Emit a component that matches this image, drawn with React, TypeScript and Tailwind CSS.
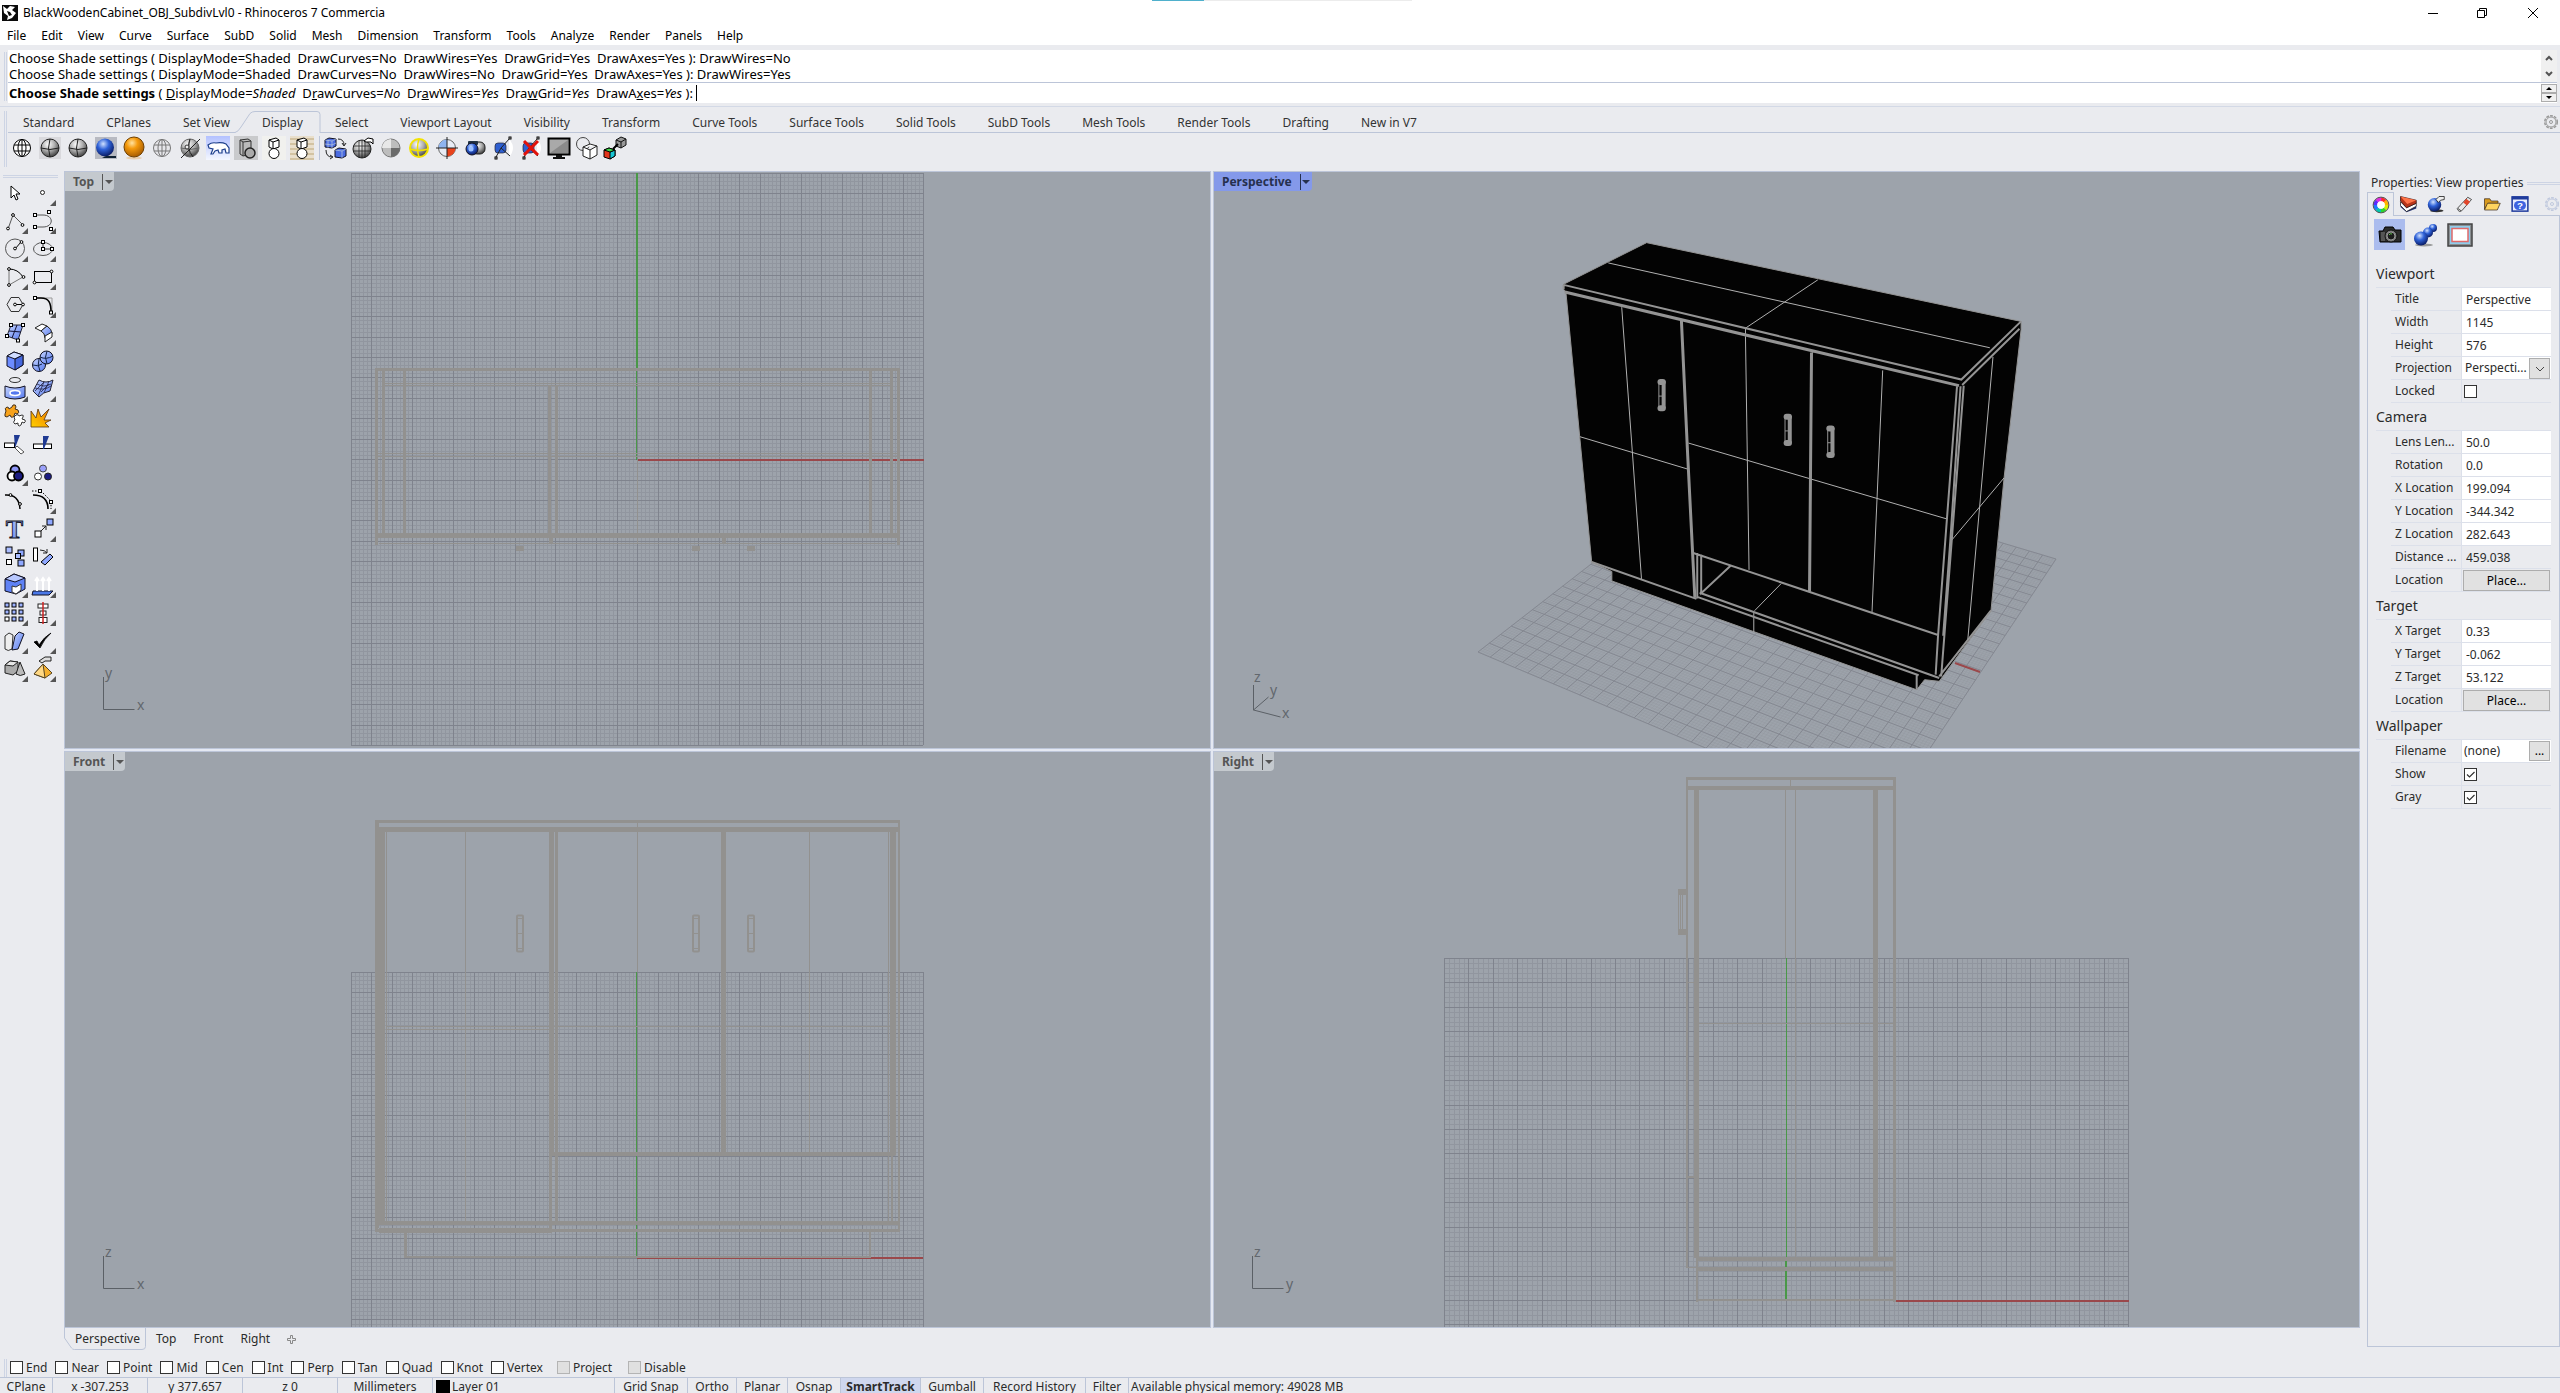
import React from "react";

const MENUS = ["File", "Edit", "View", "Curve", "Surface", "SubD", "Solid", "Mesh", "Dimension", "Transform", "Tools", "Analyze", "Render", "Panels", "Help"];

const TABS = [
  "Standard", "CPlanes", "Set View", "Display", "Select", "Viewport Layout", "Visibility", "Transform",
  "Curve Tools", "Surface Tools", "Solid Tools", "SubD Tools", "Mesh Tools", "Render Tools", "Drafting", "New in V7",
];

const SNAPS = ["End", "Near", "Point", "Mid", "Cen", "Int", "Perp", "Tan", "Quad", "Knot", "Vertex"];

const TOGGLES = [
  { name: "Grid Snap", width: "w-[73px]" },
  { name: "Ortho", width: "w-[49px]" },
  { name: "Planar", width: "w-[51px]" },
  { name: "Osnap", width: "w-[53px]" },
  { name: "SmartTrack", width: "w-[80px]", on: true },
  { name: "Gumball", width: "w-[63px]" },
  { name: "Record History", width: "w-[102px]" },
  { name: "Filter", width: "w-[43px]" },
];

const WIRE = "#92918f";
const GREEN = "#4a9848";
const RED = "#9a484b";

/* ---------- shared paint ---------- */

const Paints = () => (
  <svg className="absolute size-0" aria-hidden>
    <defs>
      <radialGradient id="gray" cx="0.4" cy="0.3" r="0.7">
        <stop offset="0" stopColor="#fff" />
        <stop offset="0.5" stopColor="#b0b0b0" />
        <stop offset="1" stopColor="#444" />
      </radialGradient>
      <radialGradient id="blue" cx="0.4" cy="0.3" r="0.7">
        <stop offset="0" stopColor="#cfe0ff" />
        <stop offset="0.45" stopColor="#2f62d8" />
        <stop offset="1" stopColor="#0a1c66" />
      </radialGradient>
      <radialGradient id="orange" cx="0.4" cy="0.3" r="0.7">
        <stop offset="0" stopColor="#ffe2a0" />
        <stop offset="0.4" stopColor="#f59a0c" />
        <stop offset="1" stopColor="#a85c00" />
      </radialGradient>
      <linearGradient id="sky" x1="0" y1="0" x2="1" y2="1">
        <stop offset="0" stopColor="#c5d4ff" />
        <stop offset="1" stopColor="#5478ee" />
      </linearGradient>
      <linearGradient id="fire" x1="0" y1="1" x2="1" y2="0">
        <stop offset="0" stopColor="#ffd000" />
        <stop offset="1" stopColor="#f07800" />
      </linearGradient>
      <linearGradient id="ice" x1="0" y1="0" x2="0" y2="1">
        <stop offset="0" stopColor="#b3c1ff" />
        <stop offset="1" stopColor="#f4f7ff" />
      </linearGradient>
    </defs>
  </svg>
);

/* ---------- left tool palette, 28px cells ---------- */

const Sq = ({ x, y, s = 3, fill = "#fff" }: { x: number; y: number; s?: number; fill?: string }) => (
  <rect x={x - s / 2} y={y - s / 2} width={s} height={s} fill={fill} stroke="#000" />
);

const Dot = ({ x, y }: { x: number; y: number }) => <circle cx={x} cy={y} r="1.4" fill="#fff" stroke="#000" />;

type Tool = { name: string; more?: boolean; art: React.ReactNode };

const TOOLS: Tool[] = [
  { name: "Select", art: <path d="M10 7v12l3-3 2 5 2-1-2-5h4z" fill="#fff" stroke="#000" /> },
  { name: "Point", more: true, art: <circle cx="13.5" cy="13.5" r="2" fill="#fff" stroke="#222" /> },
  { name: "Polyline", more: true, art: <><path d="M7 22L12 8l10 10" fill="none" stroke="#555" /><Dot x={7} y={21.5} /><Dot x={12} y={8} /><Dot x={21.5} y={18} /></> },
  { name: "Control point curve", more: true, art: <><path d="M6 8h8c11 0 11 12 0 12H6" fill="none" stroke="#555" /><Sq x={6} y={8} /><Sq x={20} y={5} /><Sq x={6} y={20} /><Sq x={22} y={22} /></> },
  { name: "Circle", more: true, art: <><circle cx="14" cy="13.5" r="9.5" fill="none" stroke="#555" /><path d="M14 14l6-7" stroke="#000" /><Dot x={14} y={13.5} /><Dot x={20.5} y={7} /></> },
  { name: "Ellipse", more: true, art: <><ellipse cx="14" cy="14" rx="9.5" ry="6.5" fill="none" stroke="#555" /><path d="M14 7v7h9" fill="none" stroke="#333" /><Sq x={14} y={7} /><Sq x={14} y={14} /><Sq x={23} y={14} /></> },
  { name: "Arc", more: true, art: <><path d="M8 6v16l14-8" fill="none" stroke="#777" /><path d="M8 6q9 0 14 8" fill="none" stroke="#000" /><Dot x={8} y={6} /><Dot x={22.5} y={14} /><Dot x={8} y={22} /></> },
  { name: "Rectangle", more: true, art: <><rect x="5.5" y="8.5" width="17" height="11" fill="none" stroke="#000" /><Dot x={5.5} y={19.5} /><Dot x={22.5} y={8.5} /></> },
  { name: "Polygon", more: true, art: <><path d="M6 13.5l4-7h8l4 7-4 7h-8z" fill="none" stroke="#333" /><path d="M14 13.5h8" stroke="#000" /><Dot x={14} y={13.5} /><Dot x={22} y={13.5} /></> },
  { name: "Fillet", more: true, art: <><path d="M7 7h16v14" fill="none" stroke="#999" /><path d="M7 7h5c8 0 10 5 10 14" fill="none" stroke="#000" strokeWidth="1.6" /><Sq x={6} y={7} /><Sq x={22} y={21.5} /></> },
  { name: "Surface from points", more: true, art: <><path d="M10 6h12l-5 15-11-4z" fill="url(#sky)" stroke="#223" /><path d="M16 6l-5 13M8 12l12 1" stroke="#113" fill="none" /><Sq x={10} y={6} /><Sq x={22} y={6} /><Sq x={17} y={21.5} /><Sq x={6} y={17} /></> },
  { name: "Surface blend", more: true, art: <><path d="M6 9l7-4 5 2-6 5z" fill="#fff" stroke="#222" /><path d="M12 12l6-5q5 3 5 8l-7 4q0-5-4-7z" fill="url(#sky)" stroke="#222" /><path d="M16 17l7-4v5l-7 5z" fill="#fff" stroke="#222" /></> },
  { name: "Box", more: true, art: <><path d="M6 9l7-4 9 3v10l-8 5-8-4z" fill="#6c8cff" stroke="#112" /><path d="M6 9l7-4 9 3-8 4z" fill="#d0dcff" stroke="#112" /><path d="M14 12l8-4v10l-8 5z" fill="#4668dd" stroke="#112" /></> },
  { name: "Boolean union", more: true, art: <><circle cx="10" cy="18" r="6.5" fill="url(#sky)" stroke="#112" /><circle cx="17.5" cy="10.5" r="6.5" fill="url(#sky)" stroke="#112" /><path d="M11 10q6 3 13-1M18 4q-3 6 0 13M4 18q5 2 9-1M10 12q-2 6 1 12" stroke="#124" fill="none" /></> },
  { name: "Project curve", more: true, art: <><ellipse cx="14" cy="5" rx="5.5" ry="2.5" fill="none" stroke="#333" /><path d="M4 11q10 4 20 0v11q-10 4-20 0z" fill="url(#sky)" stroke="#112" /><ellipse cx="14" cy="18" rx="5" ry="2.5" fill="#5478ee" stroke="#fff" strokeWidth="1.6" /></> },
  { name: "Mesh", more: true, art: <><path d="M4 16l6-11q7 4 14 0l-3 11q-7 1-11 6z" fill="url(#sky)" stroke="#223" /><path d="M8 9q7 4 14 0M6 13q9 3 16-2M9 21l6-14M15 18l5-12M6 16l9-9M12 17l8-8" stroke="#224" fill="none" strokeWidth="0.8" /></> },
  {
    name: "Explode",
    art: (
      <>
        <path d="M5 8q-2-3 1-4 2 0 2 2l3-2 1-2q3-1 3 2l-1 2 3 1q2 3-1 4l-2-1-1 3q-2 2-3 1l-1-2-3 2q-3 0-2-3z" fill="#f7a21b" stroke="#432" />
        <path d="M13 14l2-2q3-1 3 1l3-1q2 0 1 2l-1 2 3 1q1 2-1 3l-2-1-1 3q-2 2-3 0v-2l-3 1q-2-1-1-3l1-1z" fill="#fff" stroke="#333" />
      </>
    ),
  },
  { name: "Burst", art: <path d="M2 24V8l5 7 2-9 3 8 8-8-5 11h7l-6 3 4 4z" fill="url(#fire)" stroke="#531" strokeWidth="0.8" /> },
  { name: "Trim", art: <><rect x="3.5" y="12" width="10" height="4.5" fill="#fff" stroke="#000" /><path d="M13 4h6l-5 13z" fill="#1f3a93" /><path d="M16 15l7 6-3 2-6-6z" fill="#fff" stroke="#555" /></> },
  { name: "Split", art: <><rect x="4.5" y="13" width="18" height="4.5" fill="#fff" stroke="#000" /><path d="M14 5h6l-5 13h-1z" fill="#1f3a93" /></> },
  { name: "Join", more: true, art: <><circle cx="14" cy="11" r="4.5" fill="#8d95f5" stroke="#000" strokeWidth="1.8" /><circle cx="11" cy="17" r="4.5" fill="#fff" stroke="#000" strokeWidth="1.8" /><circle cx="17.5" cy="17" r="4.5" fill="#1b1b80" stroke="#000" strokeWidth="1.8" /></> },
  { name: "Group", art: <><circle cx="14" cy="9.5" r="3.5" fill="#9aa0fa" stroke="#444" /><circle cx="9" cy="17.5" r="3.5" fill="#fff" stroke="#333" /><circle cx="19" cy="17.5" r="3.5" fill="#1b1b80" stroke="#222" /></> },
  { name: "Edit points", art: <><path d="M4 8q14-1 15 14" fill="none" stroke="#000" strokeWidth="1.5" /><Dot x={9.5} y={8} /><Dot x={19} y={17} /></> },
  { name: "Control points", more: true, art: <><path d="M4 8q15 0 15 14" fill="none" stroke="#000" strokeWidth="1.6" /><path d="M3 4h9l10 10v8" fill="none" stroke="#000" strokeDasharray="1.5 1.5" /><Sq x={11} y={4} /><Sq x={22} y={15} /></> },
  { name: "Text", art: <text x="13.5" y="23" textAnchor="middle" fontFamily="Liberation Serif, serif" fontWeight="700" fontSize="26" fill="url(#sky)" stroke="#112" strokeWidth="0.9">T</text> },
  { name: "Move", more: true, art: <><Sq x={9} y={19} s={6} /><path d="M12 16l5-5m-4 0h4v4" fill="none" stroke="#222" /><Sq x={21} y={7} s={6} fill="#8fa8ff" /></> },
  { name: "Copy", art: <><Sq x={8} y={7} s={6} fill="#a9bcff" /><Sq x={8} y={19} s={5} /><Sq x={20} y={10} s={6} fill="#8fa8ff" /><Sq x={17} y={13} s={5} fill="#a9bcff" /><Sq x={20} y={20} s={6} fill="#8fa8ff" /></> },
  { name: "Rotate", art: <><rect x="4.5" y="5" width="4" height="13" fill="#fff" stroke="#000" /><path d="M11 7q5 0 7 3m0-4v4h-4" fill="none" stroke="#222" /><path d="M12 19l9-8 3 3-8 8z" fill="#8fa8ff" stroke="#000" /></> },
  { name: "Cage edit", more: true, art: <><path d="M4 8l9-5 11 4v11l-9 5-11-3z" fill="#5f82f5" stroke="#112" /><path d="M4 8l9-5 11 4-10 4z" fill="#b8c8ff" stroke="#112" /><path d="M11 15l4 1 5-3v6l-5 4-4-2z" fill="#fff" stroke="#333" /></> },
  { name: "Analyze direction", more: true, art: <><path d="M4 20h20l-4 4H3z" fill="#4a78e8" stroke="#112" /><path d="M8 20V8M14 20V8M20 20V8M6 10l2-3 2 3M12 10l2-3 2 3M18 10l2-3 2 3" stroke="#fff" strokeWidth="2" fill="none" /></> },
  { name: "Array", more: true, art: <>{[6, 13, 20].map((y) => [6, 13, 20].map((x) => <Sq key={`${x}-${y}`} x={x} y={y} s={4} fill={x < 10 && y > 15 ? "#fff" : "#9db2ff"} />))}</> },
  { name: "Align", more: true, art: <><rect x="9" y="5" width="10" height="4" fill="#fff" stroke="#222" /><rect x="11" y="12" width="6" height="4" fill="#fff" stroke="#222" /><rect x="10" y="18.5" width="8" height="5" fill="#fff" stroke="#222" /><path d="M14 3v22" stroke="#c22" strokeWidth="1.5" /></> },
  { name: "Bend", more: true, art: <><path d="M4 9l4-3 4 2-1 14q-4 3-7 0z" fill="#eee" stroke="#333" /><path d="M14 9l4-4 5 2-6 15-6 1z" fill="url(#sky)" stroke="#112" /></> },
  { name: "Check", more: true, art: <path d="M5 15l3-1 2 4q5-8 12-12-7 6-11 15z" fill="#000" stroke="#000" strokeWidth="0.8" /> },
  { name: "Solid primitives", more: true, art: <><path d="M4 10l5-4 8 1v9l-5 4-8-2z" fill="#aaa" stroke="#222" /><path d="M4 10l8 1 5-4-8-1z" fill="#e6e6e6" stroke="#222" /><path d="M19 7l5 12q-5 3-9 0z" fill="#bbb" stroke="#222" /></> },
  { name: "Render", more: true, art: <><path d="M14 9l9 9-7 5-11-4z" fill="#f5b02e" stroke="#542" /><path d="M14 9l2 14-11-4z" fill="#ffd884" stroke="#542" /><path d="M10 6l6-4h6v4h-6l-3 2z" fill="#ddd" stroke="#222" /></> },
];

/* ---------- display toolbar, 24px art ---------- */

const Mesh = ({ fill, stroke = "#222" }: { fill: string; stroke?: string }) => (
  <>
    <circle cx="12" cy="12" r="9" fill={fill} stroke={stroke} />
    <path d="M3 12q9 3 18 0M12 3q-3 9 0 18" fill="none" stroke={stroke} />
  </>
);

const Globe = ({ stroke, fill = "none" }: { stroke: string; fill?: string }) => (
  <>
    <circle cx="12" cy="12" r="8.5" fill={fill} stroke={stroke} />
    <ellipse cx="12" cy="12" rx="4" ry="8.5" fill="none" stroke={stroke} />
    <path d="M4 9h16M4 15h16M12 3.5v17" fill="none" stroke={stroke} />
  </>
);

const Cubes = ({ stroke = "#000" }: { stroke?: string }) => (
  <>
    <path d="M7 4l7-2 3 2v7l-6 2-4-2zM7 4l4 2v7M11 6l6-2" fill="#fff" stroke={stroke} />
    <circle cx="12" cy="17.5" r="5" fill="#fff" stroke={stroke} />
  </>
);

const Lens = () => (
  <>
    <path d="M18 3q8 9 0 18z" fill="#fff" />
    <path d="M7 5q-6 7 0 14l10-14" fill="#dfe3ee" />
    <rect x="4" y="7" width="11" height="10" rx="3" fill="#2e5fd0" stroke="#223" strokeWidth="0.7" />
    <path d="M10 12L19 2M10 12l9 8M10 12L5 21" stroke="#222" fill="none" />
    <Sq x={19} y={2} s={2} />
    <Sq x={5} y={22} s={2} />
  </>
);

const DISPLAY_MODES: Tool[] = [
  { name: "Wireframe", art: <Globe stroke="#000" fill="#fff" /> },
  { name: "Shaded", art: <><path d="M1 1h22v22H1z" fill="#c8c8cc" opacity="0.5" /><Mesh fill="url(#gray)" /></> },
  { name: "Shade", art: <Mesh fill="url(#gray)" /> },
  { name: "Rendered", art: <><path d="M1 1h22v22H1z" fill="#b8bac2" /><circle cx="11" cy="11.5" r="9" fill="url(#blue)" /><path d="M12 20h10v2H8z" fill="#123" /></> },
  { name: "Render preview", art: <><ellipse cx="12" cy="22" rx="8" ry="1.5" fill="#e9cfb0" /><circle cx="12" cy="11" r="10" fill="url(#orange)" stroke="#704000" /></> },
  { name: "Ghosted", art: <Globe stroke="#777" fill="#e6e6ea" /> },
  { name: "X-ray", art: <><Mesh fill="url(#gray)" stroke="#666" /><path d="M3 22L22 3M12 3q-4 9 3 18" stroke="#222" fill="none" /><circle cx="9" cy="11" r="2" fill="#eee" stroke="#333" /></> },
  { name: "Arctic", art: <><rect width="24" height="24" fill="url(#ice)" /><path d="M2 9q4-3 8-2 6-1 10 1l3 4v5h-3l-1-4-3 1v3h-3l-1-3-3 1-2 3H5l2-5-4-1z" fill="#fff" stroke="#1d3f8c" strokeWidth="1.2" /></> },
  { name: "Technical", art: <><rect width="24" height="24" fill="#c9cacc" /><path d="M6 4l8-1 3 2v13l-8 2-3-2zM6 4l3 2v14M9 6l8-1" fill="#bbb" stroke="#333" /><circle cx="16" cy="17" r="5" fill="#aaa" stroke="#222" strokeWidth="1.5" /></> },
  { name: "Artistic", art: <><rect width="24" height="24" fill="#f1f1ee" /><Cubes /></> },
  { name: "Pen", art: <><path d="M0 0h24v24H0z" fill="#e9dfcc" /><path d="M0 3h24M0 8h24M0 13h24M0 18h24M0 23h24" stroke="#d3c3a2" strokeWidth="2" /><Cubes /></> },
];

const DISPLAY_TOOLS: Tool[] = [
  { name: "Swap display", art: <><path d="M2 4l4-2 7 1v7l-4 2-7-1zM12 14l4-2 7 1v7l-4 2-7-1z" fill="#4a6be0" stroke="#112" /><path d="M2 4l7 1 4-2M9 5v7M5 4v8M2 8l7 1 4-2M12 14l7 1 4-2M19 15v7" stroke="#bcd" strokeWidth="0.7" fill="none" /><path d="M15 3q6 0 6 6m-2-2l2 3 2-3M3 14q0 7 6 7m-2-2l3 2-3 2" stroke="#222" fill="none" /></> },
  { name: "Flat shade", art: <><circle cx="11" cy="13" r="9" fill="url(#gray)" stroke="#222" /><path d="M2.5 10h17M2.5 15h17M8 4.5v17M14 4.5v17M11 4v18" stroke="#222" fill="none" strokeWidth="0.8" /><path d="M13 5l4-3 5 1v5l-2-2h-5z" fill="#fff" stroke="#000" /></> },
  { name: "Shade selected", art: <><circle cx="12" cy="12" r="9" fill="#bdbdbd" stroke="#777" /><path d="M12 3a9 9 0 0 0-9 9h9z" fill="#e8e8e8" /><path d="M12 12v9a9 9 0 0 0 9-9z" fill="#6b6b6b" /></> },
  { name: "Highlight", art: <><circle cx="12" cy="12" r="9" fill="url(#gray)" stroke="#f2e200" strokeWidth="2" /><path d="M3 13q9 3 18 0M12 3q-3 9 0 18" fill="none" stroke="#f2e200" strokeWidth="1.5" /></> },
  { name: "Color wheel", art: <><circle cx="12" cy="12" r="8.5" fill="#e8ecf5" stroke="#666" /><path d="M12 3.5A8.5 8.5 0 0 0 3.5 12H12z" fill="#8fb4f0" /><path d="M12 12v8.500a8.500 8.500 0 0 0 8.500-8.500z" fill="#e8431c" /><path d="M1 12h22M12 1v22" stroke="#222" /></> },
  { name: "Camera sphere", art: <><rect x="9" y="6" width="13" height="12" rx="5" fill="url(#gray)" stroke="#222" /><rect x="5" y="5" width="10" height="4" rx="1" fill="#234" /><circle cx="9" cy="13" r="6" fill="url(#blue)" stroke="#112" /><circle cx="8" cy="13" r="2.5" fill="#9cc0ff" /></> },
  { name: "Clipping plane", art: <Lens /> },
  { name: "Disable clipping plane", art: <><Lens /><path d="M5 5l14 14M19 5L5 19" stroke="#e3120b" strokeWidth="3" /></> },
  { name: "Full screen", art: <><rect x="1.5" y="2.5" width="21" height="16" fill="#a9a9a9" stroke="#000" strokeWidth="2" /><path d="M3 17L21 4v13z" fill="#8a8a8a" /><path d="M9 19h6v2h3v2H6v-2h3z" fill="#111" /></> },
  { name: "Object display", art: <><circle cx="8" cy="8" r="6.5" fill="none" stroke="#444" /><path d="M8 11l7-3 7 2v9l-7 4-7-3zM8 11l7 3 7-4M15 14v9" fill="#fff" stroke="#222" /></> },
  { name: "Match display", art: <><path d="M13 4l5-3 5 2v6l-5 3-5-2z" fill="#999" stroke="#111" /><path d="M13 4l5 2 5-3M18 6v6" stroke="#111" fill="none" /><path d="M10 13l5-5" stroke="#000" strokeWidth="2" /><path d="M1 14l5-2 6 2v6l-5 3-6-2z" fill="#e2361b" stroke="#000" /><path d="M7 16l5-2v6l-5 3z" fill="#19c7d6" stroke="#000" /><path d="M1 14l5-2 6 2-5 2z" fill="#3ed84a" stroke="#000" /></> },
];

const IconButton = ({ tool }: { tool: Tool }) => (
  <button type="button" aria-label={tool.name} className="flex h-7 w-7 items-center justify-center">
    <svg viewBox="0 0 24 24" className="size-6">{tool.art}</svg>
  </button>
);

const Gear = ({ className }: { className: string }) => (
  <svg viewBox="0 0 16 16" className={className} fill="none" stroke="currentColor">
    <circle cx="8" cy="8" r="6.3" strokeWidth="1.5" strokeDasharray="2.8 1.2" />
    <circle cx="8" cy="8" r="5" />
    <circle cx="8" cy="8" r="1.5" />
  </svg>
);

/* ---------- viewport drawings ---------- */

const gridPath = (x: number, y: number, step: number, count: number) => {
  const size = step * count;
  let d = "";
  for (let i = 0; i <= count; i++) {
    const gx = Math.round(x + i * step) + 0.5;
    const gy = Math.round(y + i * step) + 0.5;
    d += `M${gx} ${y}v${size}M${x} ${gy}h${size}`;
  }
  return d;
};

const FlatGrid = ({ x, y, cell }: { x: number; y: number; cell: number }) => (
  <g fill="none" shapeRendering="crispEdges">
    <path d={gridPath(x, y, cell / 5, 140)} stroke="#91969f" />
    <path d={gridPath(x, y, cell, 28)} stroke="#7f838d" />
  </g>
);

/** filled bars, each [left, top, right, bottom] */
const Bars = ({ list, fill = WIRE }: { list: number[][]; fill?: string }) => (
  <g fill={fill} shapeRendering="crispEdges">
    {list.map(([l, t, r, b]) => <rect key={`${l}-${t}-${r}-${b}`} x={l} y={t} width={r - l} height={b - t} />)}
  </g>
);

const AxisIcon = ({ x, y, h, v }: { x: number; y: number; h: string; v: string }) => (
  <>
    <path d={`M${x + 0.5} ${y - 32}v32.5h31`} fill="none" stroke="#5b6066" />
    <g fill="#62676d" fontSize="14" fontFamily="Noto Sans, sans-serif">
      <text x={x + 2} y={y - 31}>{v}</text>
      <text x={x + 34} y={y + 1}>{h}</text>
    </g>
  </>
);

const TopView = () => (
  <>
    <FlatGrid x={351} y={173} cell={20.44} />
    <Bars fill={GREEN} list={[[636, 173, 638, 368], [636, 370, 637, 460]]} />
    <Bars fill={RED} list={[[638, 459, 924, 461]]} />
    <Bars
      list={[
        [375, 368, 900, 371], [383, 383, 892, 384], [383, 385, 892, 386], [375, 453, 900, 454], [375, 456, 900, 457],
        [375, 533, 900, 538], [379, 543, 895, 544],
        [375, 368, 378, 545], [382, 368, 385, 535], [403, 368, 406, 535], [548, 385, 551, 535], [555, 385, 558, 535],
        [869, 368, 872, 535], [890, 368, 893, 535], [897, 368, 900, 545],
        [549, 538, 553, 544], [722, 538, 726, 544], [637, 460, 638, 543],
        [516, 546, 524, 551], [692, 546, 700, 551], [747, 546, 755, 551],
      ]}
    />
    <AxisIcon x={103} y={709} h="x" v="y" />
  </>
);

const FRONT_HANDLES = [516, 692, 747];

const FrontView = () => (
  <>
    <FlatGrid x={351} y={972} cell={20.44} />
    <Bars fill={GREEN} list={[[636, 972, 637, 1257]]} />
    <Bars fill={RED} list={[[637, 1258, 870, 1259], [870, 1257, 923, 1259]]} />
    <Bars
      list={[
        [375, 820, 900, 823], [375, 827, 900, 832],
        [375, 820, 378, 1232], [378, 823, 379, 1228], [379, 832, 385, 1225], [386, 832, 387, 1225],
        [549, 832, 554, 1155], [549, 1155, 552, 1228], [555, 832, 558, 1225],
        [721, 832, 726, 1153], [888, 832, 889, 1225], [890, 832, 896, 1155], [891, 1155, 893, 1225], [898, 820, 900, 1232],
        [465, 832, 466, 1222], [809, 832, 810, 1152], [637, 823, 638, 972],
        [386, 1026, 890, 1027], [386, 1029, 549, 1030],
        [551, 1152, 895, 1156], [380, 1221, 899, 1225], [375, 1229, 900, 1232], [379, 1228, 552, 1233],
        [404, 1232, 407, 1257], [869, 1232, 871, 1257], [404, 1256, 871, 1258],
      ]}
    />
    {FRONT_HANDLES.map((x) => (
      <g key={x} fill="none" stroke={WIRE}>
        <rect x={x + 1} y="915.5" width="6" height="36" rx="1" strokeWidth="2" />
        <path d={`M${x} 918.5h8M${x} 933.5h8M${x} 948.5h8`} />
      </g>
    ))}
    <AxisIcon x={103} y={1288} h="x" v="z" />
  </>
);

const RightView = () => (
  <>
    <FlatGrid x={1444} y={958} cell={24.43} />
    <Bars fill={GREEN} list={[[1786, 958, 1787, 1261], [1785, 1261, 1787, 1299]]} />
    <Bars fill={RED} list={[[1895, 1300, 2129, 1302]]} />
    <Bars
      list={[
        [1686, 777, 1896, 780], [1686, 786, 1896, 790],
        [1686, 777, 1688, 1268], [1694, 790, 1699, 1258], [1873, 790, 1878, 1257], [1893, 777, 1896, 1302],
        [1785, 790, 1786, 958], [1795, 790, 1796, 1257], [1790, 780, 1791, 786],
        [1688, 982, 1697, 983], [1686, 1176, 1697, 1178], [1699, 1023, 1893, 1024],
        [1697, 1257, 1895, 1261], [1697, 1267, 1895, 1271], [1686, 1267, 1697, 1268],
        [1696, 1258, 1698, 1302], [1696, 1299, 1896, 1301],
        [1678, 889, 1686, 895], [1678, 929, 1686, 935], [1678, 895, 1679, 929], [1680, 895, 1681, 929], [1682, 895, 1683, 929],
      ]}
    />
    <AxisIcon x={1252} y={1288} h="y" v="z" />
  </>
);

// ground plane corners: far, right, near, left
const GROUND = [[1725, 460], [2056, 559], [1881, 822], [1478, 652]];

/** maps the unit square on the ground plane quad */
const project = (u: number, v: number) => {
  const [[x0, y0], [x1, y1], [x2, y2], [x3, y3]] = GROUND;
  const dx1 = x1 - x2, dx2 = x3 - x2, dx3 = x0 - x1 + x2 - x3;
  const dy1 = y1 - y2, dy2 = y3 - y2, dy3 = y0 - y1 + y2 - y3;
  const det = dx1 * dy2 - dx2 * dy1;
  const g = (dx3 * dy2 - dx2 * dy3) / det;
  const h = (dx1 * dy3 - dx3 * dy1) / det;
  const w = g * u + h * v + 1;
  const px = ((x1 - x0 + g * x1) * u + (x3 - x0 + h * x3) * v + x0) / w;
  const py = ((y1 - y0 + g * y1) * u + (y3 - y0 + h * y3) * v + y0) / w;
  return `${px.toFixed(1)} ${py.toFixed(1)}`;
};

const groundPath = (count: number) =>
  Array.from({ length: count + 1 }, (_, i) => i / count)
    .map((t) => `M${project(t, 0)}L${project(t, 1)}M${project(0, t)}L${project(1, t)}`)
    .join("");

const PERSPECTIVE_HANDLES = [[510, 517], [829, 620], [937, 655]];

const PerspectiveView = () => (
  <>
    <path d={groundPath(140)} stroke="#8d929b" strokeWidth="0.6" opacity="0.45" fill="none" />
    <path d={groundPath(28)} stroke="#82868f" strokeWidth="0.9" fill="none" />
    <path d="M1955 663l25 9" stroke={RED} strokeWidth="2" />
    {/* cabinet */}
    <g transform="translate(1460 220) scale(0.3954 0.338)" fill="none" stroke="#949494">
      <path
        d="M472 67L1419 300V325L1376 763 1343 1155 1212 1365 1175 1360 1155 1390 384 1068V1040L333 1012 268 215 262 205V190z"
        fill="#030303"
        strokeWidth="1"
        vectorEffect="non-scaling-stroke"
      />
      <path
        d="M375 127L1340 378M905 177L722 320V345L731 1035M409 258L436 688 459 1062M1069 445L1042 1160M303 641L576 737M578 660L1230 884M1243 948L1376 763M1348 405L1284 1245M745 1156L812 1076M743 1160V1218"
        stroke="#b0b0b0"
        strokeWidth="1"
        vectorEffect="non-scaling-stroke"
      />
      <path
        d="M262 192L1268 472 1419 300M1270 488L1415 322M1257 492L1209 1230 1203 1345M1274 490L1217 1350M590 985L1209 1228M600 985V1120M610 990V1104L685 1022M606 1103L1212 1355M600 1115L1160 1347M1155 1347V1390M1212 1350L1343 1155M333 1012L598 1121M262 192V205"
        strokeWidth="2"
        vectorEffect="non-scaling-stroke"
      />
      <path
        d="M265 213L1262 490M560 298L576 700 594 1118M889 392L884 1100"
        strokeWidth="3"
        vectorEffect="non-scaling-stroke"
      />
      <path d="M1266 492L1240 950 1222 1230" strokeWidth="2" vectorEffect="non-scaling-stroke" />
      {PERSPECTIVE_HANDLES.map(([x, y]) => (
        <g key={x}>
          <path d={`M${x + 5} ${y - 40}V${y + 40}`} strokeWidth="4" vectorEffect="non-scaling-stroke" />
          <path d={`M${x - 7} ${y - 40}V${y + 40}M${x - 7} ${y + 4}h14`} strokeWidth="1" vectorEffect="non-scaling-stroke" />
          <path
            d={`M${x - 3} ${y - 38}h6M${x - 3} ${y + 40}h6`}
            strokeWidth="6"
            strokeLinecap="round"
            vectorEffect="non-scaling-stroke"
          />
        </g>
      ))}
    </g>
    <path d="M1253.5 685v25l15-13M1253.5 710l27 7" fill="none" stroke="#5b6066" />
    <g fill="#62676d" fontSize="14" fontFamily="Noto Sans, sans-serif">
      <text x="1254" y="682">z</text>
      <text x="1270" y="695">y</text>
      <text x="1282" y="718">x</text>
    </g>
  </>
);

type Viewport = { name: string; box: string; active?: boolean; view: React.ReactNode };

const VIEWPORTS: Viewport[] = [
  { name: "Top", box: "65 172 1145 576", view: <TopView /> },
  { name: "Perspective", box: "1214 172 1145 576", active: true, view: <PerspectiveView /> },
  { name: "Front", box: "65 752 1145 575", view: <FrontView /> },
  { name: "Right", box: "1214 752 1145 575", view: <RightView /> },
];

const ViewportPane = ({ viewport }: { viewport: Viewport }) => (
  <section className="relative min-h-0 overflow-hidden border border-[#bcc5d8] bg-[#9da3ab]">
    <svg viewBox={viewport.box} preserveAspectRatio="xMidYMin slice" className="block h-full w-full">
      {viewport.view}
    </svg>
    <button
      type="button"
      className={
        "absolute left-0 top-0 flex h-[19px] items-center rounded-br-sm pl-2 text-[12px] font-bold " +
        (viewport.active ? "bg-[#8499ea] text-[#26304f]" : "bg-[#c4c9ce] text-[#555]")
      }
    >
      {viewport.name}
      <span className="ml-2 flex h-4 w-3 items-center justify-center border-l border-current">
        <svg viewBox="0 0 8 4" className="h-1 w-2"><path d="M0 0h8L4 4z" fill="currentColor" /></svg>
      </span>
    </button>
  </section>
);

/* ---------- properties panel ---------- */

const PANEL_TABS: Tool[] = [
  {
    name: "Properties",
    art: (
      <g fill="none" strokeWidth="5">
        {["#ff2a2a", "#ffb000", "#d8f000", "#2ed32e", "#00c8b0", "#1e7bff", "#5a2cff", "#e02ce0"].map((c, i) => (
          <path key={c} d="M12 4.500A7.500 7.500 0 0 1 17.600 7" stroke={c} transform={`rotate(${i * 45} 12 12)`} />
        ))}
        <circle cx="12" cy="12" r="10.5" stroke="#222" strokeWidth="1" />
        <circle cx="12" cy="12" r="5" fill="#fff" stroke="none" />
      </g>
    ),
  },
  { name: "Layers", art: <><path d="M2 12l8 9 13-7v4L10 23 2 16z" fill="#1c2b6b" /><path d="M2 9l8 8 13-6v4l-13 7-8-8z" fill="#fff" stroke="#222" /><path d="M2 2l21 5v4l-13 6L2 8z" fill="#b8361a" stroke="#311" /><path d="M2 2l21 5-12 5z" fill="#ff7448" /></> },
  { name: "Rendering", art: <><ellipse cx="13" cy="21" rx="9" ry="2" fill="#333" /><circle cx="10" cy="13" r="9" fill="url(#blue)" /><path d="M12 6l4-4h7v4l-5 1-3 3z" fill="#eee" stroke="#111" /></> },
  { name: "Materials", art: <><path d="M3 18L17 3l5 3L9 21q-4 3-6-3z" fill="#e8e8e8" stroke="#222" /><path d="M11 10l4-5 5 4-4 5z" fill="#e2462a" /><path d="M4 18l4 3" stroke="#222" /></> },
  { name: "Libraries", art: <><path d="M2 5h7l2 3h9v3H7L2 19z" fill="#d99a1c" stroke="#432" /><path d="M6 11h17l-4 9H2z" fill="#ffd45e" stroke="#432" /></> },
  { name: "Help", art: <><rect x="1.5" y="2.5" width="21" height="19" fill="#e9eeff" stroke="#1f3b9c" strokeWidth="2" /><path d="M1 2h22v4H1z" fill="#1f3b9c" /><rect x="4" y="8" width="16" height="12" rx="6" fill="#3e63e0" /><text x="12" y="19" textAnchor="middle" fontSize="13" fontWeight="700" fontFamily="Liberation Sans, sans-serif" fill="#fff">?</text></> },
];

type Row = { label: string; value?: string; kind?: "text" | "readonly" | "select" | "check" | "button" | "file"; checked?: boolean };

const SECTIONS: { title: string; rows: Row[] }[] = [
  {
    title: "Viewport",
    rows: [
      { label: "Title", value: "Perspective" },
      { label: "Width", value: "1145" },
      { label: "Height", value: "576" },
      { label: "Projection", value: "Perspecti...", kind: "select" },
      { label: "Locked", kind: "check" },
    ],
  },
  {
    title: "Camera",
    rows: [
      { label: "Lens Len...", value: "50.0" },
      { label: "Rotation", value: "0.0" },
      { label: "X Location", value: "199.094" },
      { label: "Y Location", value: "-344.342" },
      { label: "Z Location", value: "282.643" },
      { label: "Distance ...", value: "459.038", kind: "readonly" },
      { label: "Location", value: "Place...", kind: "button" },
    ],
  },
  {
    title: "Target",
    rows: [
      { label: "X Target", value: "0.33" },
      { label: "Y Target", value: "-0.062" },
      { label: "Z Target", value: "53.122" },
      { label: "Location", value: "Place...", kind: "button" },
    ],
  },
  {
    title: "Wallpaper",
    rows: [
      { label: "Filename", value: "(none)", kind: "file" },
      { label: "Show", kind: "check", checked: true },
      { label: "Gray", kind: "check", checked: true },
    ],
  },
];

const Tick = ({ id, checked, disabled }: { id: string; checked?: boolean; disabled?: boolean }) => (
  <span className="relative size-[13px] shrink-0">
    <input
      id={id}
      type="checkbox"
      defaultChecked={checked}
      disabled={disabled}
      className="peer block size-[13px] appearance-none border border-[#333] bg-white disabled:border-[#b4b4b4] disabled:bg-[#e0e0e0]"
    />
    <svg viewBox="0 0 13 13" className="pointer-events-none absolute inset-0 hidden peer-checked:block">
      <path d="M3 6.500l2.500 2.500L10.500 4" fill="none" stroke="#333" strokeWidth="1.2" />
    </svg>
  </span>
);

const RowValue = ({ id, row }: { id: string; row: Row }) => {
  switch (row.kind) {
    case "check":
      return <div className="flex flex-1 items-center pl-[2px]"><Tick id={id} checked={row.checked} /></div>;
    case "button":
      return (
        <button id={id} type="button" className="m-px h-[21px] flex-1 border border-[#adadad] bg-[#e1e1e1] text-black">
          {row.value}
        </button>
      );
    case "select":
      return (
        <div className="relative flex h-[22px] flex-1 bg-white">
          <select id={id} className="w-full appearance-none bg-transparent pl-[3px]">
            <option>{row.value}</option>
          </select>
          <span className="pointer-events-none absolute right-px top-px flex h-[21px] w-[21px] items-center justify-center border border-[#adadad] bg-[#e1e1e1]">
            <svg viewBox="0 0 10 6" className="h-[6px] w-[10px]"><path d="M1 1l4 4 4-4" fill="none" stroke="#444" /></svg>
          </span>
        </div>
      );
    case "file":
      return (
        <div className="flex h-[22px] flex-1 bg-white">
          <input id={id} defaultValue={row.value} className="w-0 flex-1 bg-transparent pl-[2px]" />
          <button type="button" aria-label="Browse" className="m-px w-[21px] border border-[#adadad] bg-[#e1e1e1] leading-3 text-black">...</button>
        </div>
      );
    default:
      return (
        <input
          id={id}
          defaultValue={row.value}
          readOnly={row.kind === "readonly"}
          className="h-[22px] w-0 flex-1 bg-white pl-1 read-only:bg-transparent"
        />
      );
  }
};

const PropertiesPanel = () => (
  <aside className="flex w-[193px] shrink-0 flex-col pt-[3px]">
    <header className="flex h-[18px] items-center gap-1 pl-1">
      <h2 className="whitespace-nowrap">Properties: View properties</h2>
      <span className="h-[3px] flex-1 border-y border-[#cdd4e4]" />
    </header>
    <nav className="flex h-6 items-stretch" aria-label="Panels">
      {PANEL_TABS.map((tab, i) => (
        <button
          key={tab.name}
          type="button"
          aria-label={tab.name}
          className={
            "flex items-center justify-center border-[#bcc5d8] pt-px " +
            (i === 0 ? "w-[27px] border-l border-r border-t" : "w-7 border-b")
          }
        >
          <svg viewBox="0 0 24 24" className="size-[18px]">{tab.art}</svg>
        </button>
      ))}
      <span className="flex flex-1 items-center justify-end border-b border-[#bcc5d8] text-[#c0c9de]">
        <Gear className="size-4" />
      </span>
    </nav>
    <div className="mb-1 flex-1 border-x border-b border-[#bcc5d8] pl-[6px] pr-2">
      <div className="flex gap-1 pt-[3px]">
        <button type="button" aria-label="View" className="flex h-[31px] w-[31px] items-center justify-center bg-[#abbcee]">
          <svg viewBox="0 0 24 24" className="size-6">
            <path d="M1 8h4l2-4h8l2 3h6v12H2z" fill="#2b2b2b" stroke="#000" />
            <path d="M3 9h4v9H3z" fill="#555" />
            <circle cx="13" cy="13" r="6" fill="#777" stroke="#111" />
            <circle cx="13" cy="13" r="4" fill="#1c1c1c" stroke="#9a9a9a" />
            <path d="M11 12q1-2 3-1" stroke="#5fc04a" fill="none" />
          </svg>
        </button>
        <button type="button" aria-label="Material" className="flex h-[31px] w-[31px] items-center justify-center">
          <svg viewBox="0 0 24 24" className="size-6">
            <ellipse cx="11" cy="22" rx="9" ry="1.5" fill="#999" />
            <circle cx="20" cy="5" r="4" fill="url(#blue)" />
            <circle cx="15" cy="9.5" r="5" fill="url(#blue)" />
            <circle cx="8" cy="15.5" r="7" fill="url(#blue)" />
          </svg>
        </button>
        <button type="button" aria-label="Wallpaper" className="flex h-[31px] w-8 items-center justify-center">
          <svg viewBox="0 0 26 24" className="h-6 w-[26px]">
            <rect x="1" y="1" width="24" height="22" fill="#8a8f92" stroke="#444" strokeWidth="1.5" />
            <rect x="3" y="3" width="20" height="18" fill="#8fcdec" />
            <rect x="5" y="5.5" width="16" height="13" fill="#fff" stroke="#e06a6a" strokeWidth="1.5" />
          </svg>
        </button>
      </div>
      <form className="pt-[10px]">
        {SECTIONS.map((section) => (
          <fieldset key={section.title} className="block">
            <legend className="block h-[27px] pl-[2px] text-[14px] leading-[27px]">{section.title}</legend>
            <div className="ml-[2px] border-t border-[#dce0ea]">
              {section.rows.map((row) => {
                const id = `${section.title}-${row.label}`.replace(/\W+/g, "-");
                return (
                  <div key={row.label} className="ml-[15px] flex h-[23px] border-b border-[#dce0ea]">
                    <label htmlFor={id} className="w-[71px] shrink-0 border-r border-[#dce0ea] pl-1 leading-[22px] whitespace-nowrap">
                      {row.label}
                    </label>
                    <RowValue id={id} row={row} />
                  </div>
                );
              })}
            </div>
          </fieldset>
        ))}
      </form>
    </div>
  </aside>
);

/* ---------- window chrome ---------- */

const TitleBar = () => (
  <header className="relative flex h-6 items-center bg-white pt-[2px] text-black">
    <span className="absolute left-[45%] top-0 flex h-px w-[260px] bg-[#ececec]">
      <span className="w-[52px] bg-[#4fb0cc]" />
    </span>
    <svg viewBox="0 0 16 16" className="ml-[2px] mr-[5px] size-4">
      <rect width="16" height="16" fill="#0a0a0a" />
      <path d="M1 1l4 3 3-3 5 1-3 3 4 3-4 5-5 2 1-4-4-3z" fill="#fff" />
      <path d="M5 6l3 1 2 3-3 1z" fill="#0a0a0a" />
    </svg>
    <h1>BlackWoodenCabinet_OBJ_SubdivLvl0 - Rhinoceros 7 Commercia</h1>
    <div className="ml-auto flex">
      <button type="button" aria-label="Minimize" className="flex w-[49px] justify-center">
        <svg viewBox="0 0 10 10" className="size-[10px]"><path d="M0 5.500h10" stroke="#000" /></svg>
      </button>
      <button type="button" aria-label="Restore" className="flex w-[49px] justify-center">
        <svg viewBox="0 0 10 10" className="size-[10px]"><path d="M.5 2.500h7v7h-7zM2.500 2.500v-2h7v7h-2" fill="none" stroke="#000" /></svg>
      </button>
      <button type="button" aria-label="Close" className="flex w-[54px] justify-center">
        <svg viewBox="0 0 10 10" className="size-[10px]"><path d="M0 0l10 10M10 0L0 10" stroke="#000" /></svg>
      </button>
    </div>
  </header>
);

const CommandArea = () => (
  <section className="flex border-b border-[#d3d9e6] pb-[3px] pt-[5px]">
    <span className="my-[2px] ml-1 mr-px w-[3px] border-x border-[#cdd4e4]" />
    <div className="flex-1 whitespace-pre bg-white text-[13px] text-black">
      <div className="flex h-8">
        <div className="flex-1 pl-px leading-4">
          <p>Choose Shade settings ( DisplayMode=Shaded  DrawCurves=No  DrawWires=Yes  DrawGrid=Yes  DrawAxes=Yes ): DrawWires=No</p>
          <p>Choose Shade settings ( DisplayMode=Shaded  DrawCurves=No  DrawWires=No  DrawGrid=Yes  DrawAxes=Yes ): DrawWires=Yes</p>
        </div>
        <div className="flex w-4 flex-col items-center justify-around bg-[#f0f0f0]">
          <svg viewBox="0 0 8 6" className="h-[6px] w-2"><path d="M1 5l3-3 3 3" fill="none" stroke="#555" strokeWidth="2" /></svg>
          <svg viewBox="0 0 8 6" className="h-[6px] w-2"><path d="M1 1l3 3 3-3" fill="none" stroke="#555" strokeWidth="2" /></svg>
        </div>
      </div>
      <div className="flex h-[21px] items-center border-t border-[#bcc5d8] pl-px">
        <label htmlFor="command">
          <b>Choose Shade settings</b> ( <u>D</u>isplayMode=<i>Shaded</i>  D<u>r</u>awCurves=<i>No</i>  Dr<u>a</u>wWires=<i>Yes</i>  Dra<u>w</u>Grid=<i>Yes</i>  DrawA<u>x</u>es=<i>Yes</i> ):
        </label>
        <span className="ml-[3px] h-4 w-px bg-black" />
        <input id="command" className="h-4 flex-1 outline-none" />
        <div className="flex w-4 flex-col">
          <button type="button" aria-label="Previous" className="flex h-[9px] items-center justify-center border border-[#adadad] bg-[#f0f0f0]">
            <svg viewBox="0 0 6 3" className="h-[3px] w-[6px]"><path d="M0 3h6L3 0z" /></svg>
          </button>
          <button type="button" aria-label="Next" className="flex h-[9px] items-center justify-center border border-[#adadad] bg-[#f0f0f0]">
            <svg viewBox="0 0 6 3" className="h-[3px] w-[6px]"><path d="M0 0h6L3 3z" /></svg>
          </button>
        </div>
      </div>
    </div>
    <span className="w-[3px]" />
  </section>
);

const ToolbarArea = () => (
  <section className="flex h-16 pt-1">
    <span className="mb-1 ml-1 mr-px w-[3px] border-x border-[#cdd4e4]" />
    <div className="flex-1">
      <nav className="flex h-[22px] items-stretch border-b border-[#bcc5d8] pl-[15px]" aria-label="Toolbars">
        {TABS.map((tab) => (
          <button key={tab} type="button" className="relative mr-8 pt-[2px] text-[#333]">
            {tab === "Display" && (
              <svg viewBox="0 0 86 22" className="absolute -left-[27px] top-0 h-[22px] w-[86px]">
                <path d="M0 21.500Q4 21 8 14L16 2q1-1.500 4-1.500H82q3 0 3 3V22H0z" fill="#eaebef" />
                <path d="M0 21.500Q3 21 6 16L15 2.500q2-2 5-2H82q3 0 3 3V22" fill="none" stroke="#bcc5d8" />
              </svg>
            )}
            <span className="relative">{tab}</span>
          </button>
        ))}
        <span className="ml-auto flex items-center text-[#999]"><Gear className="mr-px size-4" /></span>
      </nav>
      <div className="flex h-[30px] items-center">
        {DISPLAY_MODES.map((tool) => <IconButton key={tool.name} tool={tool} />)}
        <span className="ml-[3px] h-6 w-px bg-[#bcc5d8]" />
        <span className="w-px" />
        {DISPLAY_TOOLS.map((tool) => <IconButton key={tool.name} tool={tool} />)}
      </div>
    </div>
  </section>
);

const ToolPalette = () => (
  <aside className="w-16 shrink-0 pt-1">
    <div className="ml-[3px] mr-[6px] h-[3px] border-y border-[#cdd4e4]" />
    <div className="grid grid-cols-[28px_28px] pl-px pt-px">
      {TOOLS.map((tool) => (
        <button key={tool.name} type="button" aria-label={tool.name} className="size-7">
          <svg viewBox="0 0 28 28" className="size-7">
            {tool.art}
            {tool.more && <path d="M27 21v6h-6z" fill="#555" />}
          </svg>
        </button>
      ))}
    </div>
  </aside>
);

const ViewportTabs = () => (
  <nav className="ml-16 flex h-[23px] items-stretch gap-[10px] pb-px" aria-label="Viewport tabs">
    <button type="button" className="relative w-[82px] pl-[5px]">
      <svg viewBox="0 0 82 22" className="absolute left-0 top-0 h-[22px] w-[82px]">
        <path d="M.5 0v10l7 10q1 1.500 3 1.500H78q3.500 0 3.500-3V0" fill="none" stroke="#bcc5d8" />
      </svg>
      Perspective
    </button>
    <button type="button" className="mr-[7px]">Top</button>
    <button type="button" className="mr-[7px]">Front</button>
    <button type="button" className="mr-[7px]">Right</button>
    <button type="button" aria-label="New viewport" className="flex items-center">
      <svg viewBox="0 0 9 9" className="size-[9px]"><path d="M3.500.5h2v3h3v2h-3v3h-2v-3h-3v-2h3z" fill="none" stroke="#888" /></svg>
    </button>
  </nav>
);

const SnapBar = () => (
  <div className="flex h-[26px] items-center pt-[7px]">
    <span className="ml-1 mr-[3px] h-[18px] w-[3px] border-x border-[#cdd4e4]" />
    <div className="flex gap-2">
      {SNAPS.map((snap) => (
        <span key={snap} className="flex items-center gap-[3px]">
          <Tick id={`snap-${snap}`} />
          <label htmlFor={`snap-${snap}`}>{snap}</label>
        </span>
      ))}
    </div>
    {["Project", "Disable"].map((snap, i) => (
      <span key={snap} className={"flex items-center gap-[3px] " + (i ? "ml-4" : "ml-[14px]")}>
        <Tick id={`snap-${snap}`} disabled />
        <label htmlFor={`snap-${snap}`}>{snap}</label>
      </span>
    ))}
  </div>
);

const StatusBar = () => (
  <footer className="flex h-4 items-start whitespace-nowrap border-t border-[#bcc5d8] leading-[18px] *:h-[18px] *:shrink-0">
    <button type="button" className="w-[53px] border-r border-[#bcc5d8]">CPlane</button>
    <span className="w-[95px] border-r border-[#bcc5d8] text-center">x -307.253</span>
    <span className="w-[95px] border-r border-[#bcc5d8] text-center">y 377.657</span>
    <span className="w-[95px] border-r border-[#bcc5d8] text-center">z 0</span>
    <button type="button" className="w-[95px] border-r border-[#bcc5d8]">Millimeters</button>
    <button type="button" className="flex w-[182px] items-center gap-[2px] border-r border-[#bcc5d8] pl-[3px]">
      <span className="size-[14px] bg-black" />
      Layer 01
    </button>
    {TOGGLES.map((toggle) => (
      <button
        key={toggle.name}
        type="button"
        aria-pressed={Boolean(toggle.on)}
        className={`${toggle.width} border-r border-[#bcc5d8] ` + (toggle.on ? "bg-[#cfd7ee] font-bold" : "")}
      >
        {toggle.name}
      </button>
    ))}
    <span className="pl-[2px]">Available physical memory: 49028 MB</span>
  </footer>
);

const App = () => (
  <div className="flex h-screen flex-col overflow-hidden bg-[#eaebef] font-['Noto_Sans',sans-serif] text-[12px] leading-4 text-[#2b2b2b]">
    <Paints />
    <TitleBar />
    <nav className="flex h-[21px] items-center gap-[15px] bg-white pl-[7px] pt-[2px] text-black" aria-label="Menu">
      {MENUS.map((menu) => <button key={menu} type="button">{menu}</button>)}
    </nav>
    <CommandArea />
    <ToolbarArea />
    <div className="flex min-h-0 flex-1">
      <div className="flex min-w-0 flex-1 flex-col">
        <div className="flex min-h-0 flex-1">
          <ToolPalette />
          <main className="grid min-w-0 flex-1 grid-cols-2 grid-rows-[578fr_577fr] gap-[2px] bg-[#e4e8f2]">
            {VIEWPORTS.map((viewport) => <ViewportPane key={viewport.name} viewport={viewport} />)}
          </main>
        </div>
        <ViewportTabs />
      </div>
      <span className="w-[7px] shrink-0" />
      <PropertiesPanel />
    </div>
    <SnapBar />
    <StatusBar />
  </div>
);

export default App;
